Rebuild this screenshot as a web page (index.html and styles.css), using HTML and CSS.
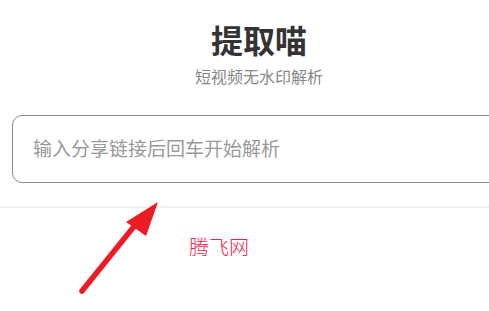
FILE: index.html
```html
<!DOCTYPE html>
<html lang="zh-CN">
<head>
    <meta charset="UTF-8">
    <meta name="viewport" content="width=device-width, initial-scale=1.0">
    <title>提取喵</title>
    <link rel="stylesheet" href="styles.css">
</head>
<body>
    <div class="page">
        <div class="header">
            <h1>提取喵</h1>
            <p class="subtitle">短视频无水印解析</p>
        </div>
        <div class="search">
            <input type="text" class="search-input" placeholder="输入分享链接后回车开始解析">
        </div>
        <div class="divider"></div>
        <div class="footer">
            <span class="brand">腾飞网</span>
        </div>
    </div>

    <!-- annotation arrow -->
    <svg class="arrow" width="489" height="311" viewBox="0 0 489 311">
        <line x1="82" y1="291" x2="140" y2="219" stroke="#ed1c24" stroke-width="5.5" stroke-linecap="round"/>
        <polygon points="158,202 126,222 146,236" fill="#ed1c24"/>
    </svg>
</body>
</html>
```

FILE: styles.css
```css
html, body {
    margin: 0;
    padding: 0;
    background: #fff;
    overflow: hidden;
}

body {
    font-family: "Noto Sans CJK SC", "Noto Sans", sans-serif;
    position: relative;
    width: 489px;
    height: 311px;
}

.page {
    width: 518px;
}

.header {
    text-align: center;
    padding-top: 19px;
}

.header h1 {
    margin: 0;
    font-size: 32px;
    line-height: 40px;
    font-weight: 700;
    color: #333;
    letter-spacing: 0;
}

.subtitle {
    margin: 6px 0 0;
    font-size: 16px;
    line-height: 22px;
    color: #888;
}

.search {
    padding: 28px 12px 0;
}

.search-input {
    box-sizing: border-box;
    display: block;
    width: 100%;
    height: 68px;
    padding: 0 20px 4px;
    border: 1px solid #8c8c8c;
    border-radius: 10px;
    font-family: inherit;
    font-size: 19px;
    color: #333;
    outline: none;
    background: #fff;
}

.search-input::placeholder {
    color: #999;
}

.divider {
    margin-top: 23px;
    height: 2px;
    background: #f0f0f0;
}

.footer {
    padding: 25px 0 0 189px;
}

.brand {
    font-size: 20px;
    line-height: 28px;
    font-weight: 300;
    color: #ec2550;
}

.arrow {
    position: absolute;
    left: 0;
    top: 0;
    pointer-events: none;
}
```
